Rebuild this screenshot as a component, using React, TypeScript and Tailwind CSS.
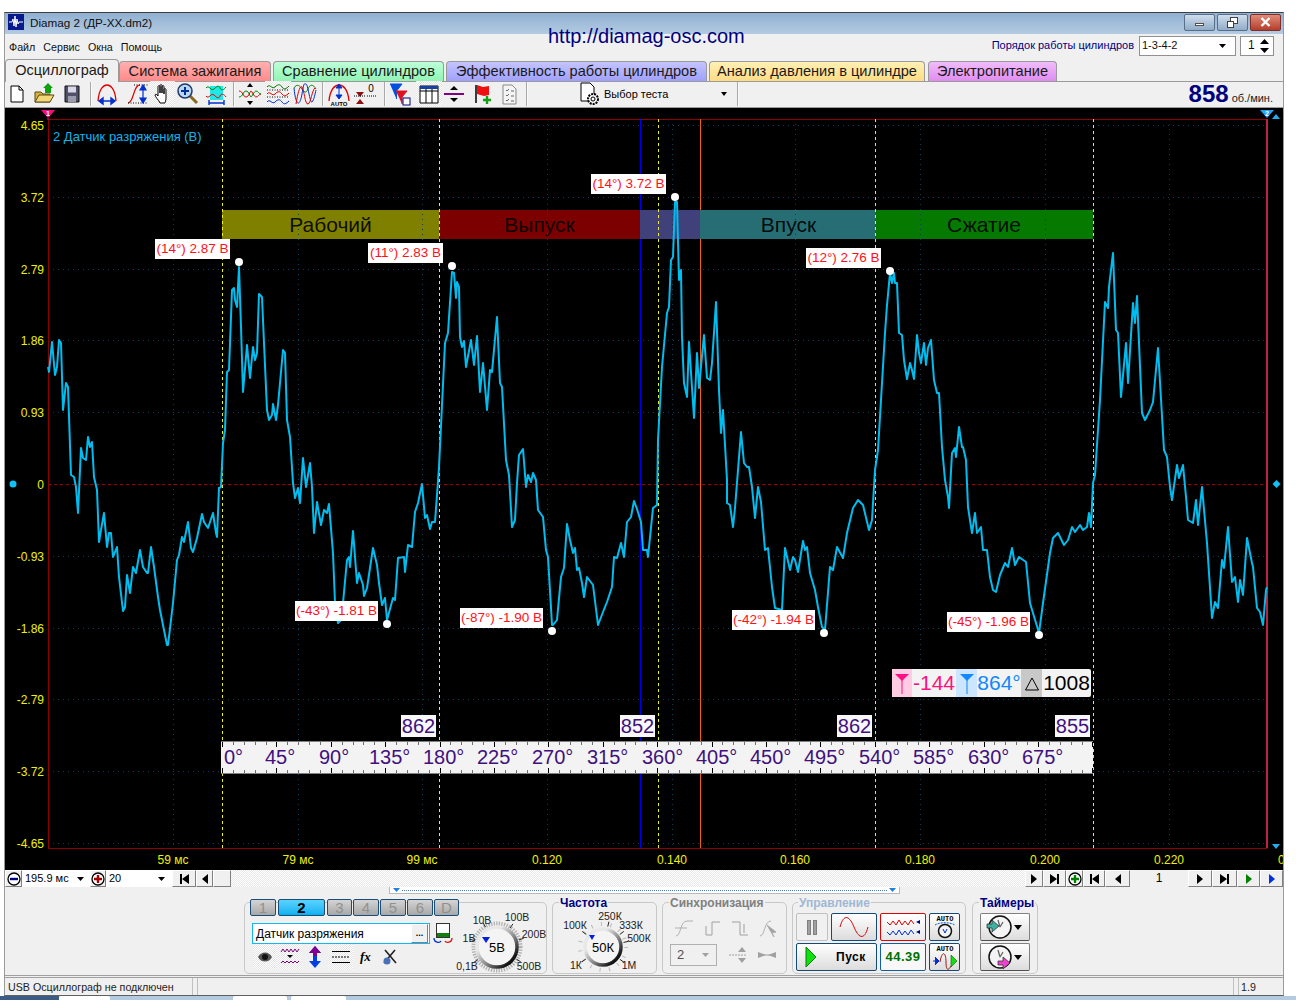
import React from 'react';

// кривая датчика разряжения, координаты страницы
const TRACE = `48,367 49,372 50,362 52,342 55,375 57,367 59,340 61,343 63,410 66,383 68,387 71,475 74,477 76,487 78,513 81,448 83,458 86,460 88,437 90,447 92,442 94,477 97,490 99,542 101,530 104,513 107,547 109,533 111,533 113,557 117,547 119,577 123,611 125,607 127,575 130,593 133,567 136,573 140,550 143,567 147,573 148,573 151,547 154,567 158,597 160,610 163,625 167,645 168,645 171,620 173,603 177,560 179,555 182,537 184,542 188,522 191,548 193,552 197,538 202,514 204,522 208,528 213,513 216,533 217,537 219,488 221,487 223,443 225,430 227,372 229,370 232,290 234,288 235,300 237,307 239,267 241,327 243,392 247,345 250,378 253,347 255,360 257,353 259,294 262,297 264,343 267,410 269,420 272,415 273,404 276,420 278,405 283,350 285,353 287,420 290,437 293,483 295,498 298,488 300,503 303,458 306,487 310,463 312,487 314,533 317,502 321,525 324,510 327,513 329,504 333,553 335,603 338,623 341,620 343,603 347,560 349,557 350,567 353,531 357,583 359,573 363,585 364,596 367,588 373,548 377,565 379,583 382,605 385,598 387,620 393,598 395,600 398,558 404,557 405,572 408,545 412,547 415,512 418,503 422,484 425,518 427,515 430,529 432,522 435,522 437,495 439,467 445,343 448,333 452,272 454,273 456,298 457,282 459,287 460,337 462,347 464,341 466,367 471,340 474,365 477,336 480,392 483,363 487,410 490,370 492,372 497,317 500,383 502,387 506,460 509,475 512,527 515,520 517,483 519,455 523,449 526,487 528,475 531,482 533,473 536,480 538,510 543,517 546,550 548,557 552,625 553,625 557,620 561,577 564,568 567,524 570,540 573,553 575,548 577,570 579,568 582,583 584,597 587,577 593,585 598,625 603,612 607,602 612,587 614,557 617,558 621,543 624,557 627,522 631,517 634,501 637,509 641,522 643,550 647,550 648,557 653,508 657,505 658,440 662,367 667,313 669,307 671,260 673,257 675,202 677,202 679,280 681,270 682,337 684,383 687,397 689,342 694,418 697,353 699,388 704,335 707,378 710,380 712,363 716,302 719,390 721,433 723,410 727,480 727,503 730,505 733,527 735,508 738,470 741,432 744,463 747,467 749,467 752,487 755,518 758,487 761,502 765,550 768,548 772,587 775,608 782,610 785,548 790,570 793,557 795,560 798,572 803,541 805,550 807,547 810,573 815,590 818,607 822,627 825,630 830,567 833,570 837,547 843,558 847,533 853,508 858,500 863,505 869,530 872,520 875,470 878,450 885,333 887,305 890,273 892,283 894,273 895,283 897,283 899,333 902,335 904,360 907,379 910,363 912,370 914,379 917,335 919,353 921,363 924,343 926,365 928,348 931,340 934,380 937,393 939,393 942,447 945,480 948,497 949,508 952,453 955,448 956,457 959,427 962,447 963,447 966,460 968,507 972,533 975,513 977,533 981,527 983,550 987,550 990,577 993,590 996,592 1000,575 1005,563 1008,567 1012,548 1015,565 1019,557 1026,562 1030,603 1033,613 1039,633 1043,603 1050,553 1053,538 1058,533 1064,545 1068,540 1072,527 1075,532 1080,525 1083,530 1087,527 1089,513 1091,527 1093,483 1095,475 1100,400 1105,302 1108,308 1109,287 1113,253 1116,330 1118,333 1121,397 1126,343 1128,383 1133,303 1135,323 1137,296 1142,413 1145,420 1150,410 1153,402 1158,348 1164,450 1167,457 1170,487 1172,500 1177,465 1179,478 1183,465 1186,497 1188,520 1193,523 1196,500 1198,525 1202,487 1207,543 1212,618 1215,602 1218,608 1222,560 1224,568 1228,527 1232,582 1235,577 1238,602 1240,580 1243,595 1247,538 1252,563 1253,567 1257,608 1260,612 1263,625 1266,590 1267,587`;

const Y_LABELS = [
    ['4.65', 125], ['3.72', 197], ['2.79', 269], ['1.86', 340], ['0.93', 412], ['0', 484],
    ['-0.93', 556], ['-1.86', 628], ['-2.79', 699], ['-3.72', 771], ['-4.65', 843],
] as const;
const X_LABELS = [
    ['59 мс', 173], ['79 мс', 298], ['99 мс', 422], ['0.120', 547], ['0.140', 672],
    ['0.160', 795], ['0.180', 920], ['0.200', 1045], ['0.220', 1169],
] as const;
const V_GRID = [173, 298, 422, 547, 672, 795, 920, 1045, 1169];
const STROKES = [222, 439, 658, 875, 1093];
const PEAKS = [
    ['(14°) 2.87 В', 155, 239, 75],
    ['(11°) 2.83 В', 368, 243, 75],
    ['(14°) 3.72 В', 591, 174, 75],
    ['(12°) 2.76 В', 806, 248, 75],
    ['(-43°) -1.81 В', 295, 601, 83],
    ['(-87°) -1.90 В', 460, 608, 83],
    ['(-42°) -1.94 В', 732, 610, 83],
    ['(-45°) -1.96 В', 947, 612, 83],
] as const;
const DOTS = [[239, 262], [452, 266], [675, 197], [890, 271], [387, 624], [552, 631], [824, 633], [1039, 635]];
const RPMS = [['862', 401], ['852', 620], ['862', 837], ['855', 1055]] as const;
const DEGREES = [
    ['0°', 224], ['45°', 265], ['90°', 319], ['135°', 369], ['180°', 423], ['225°', 477], ['270°', 532], ['315°', 587],
    ['360°', 642], ['405°', 696], ['450°', 750], ['495°', 804], ['540°', 859], ['585°', 913], ['630°', 968], ['675°', 1022],
] as const;

const Sep = () => <div className="w-[2px] h-[24px] border-l border-[#a8a8a8] bg-white/60" />;

const Doc = () => (
    <svg width="24" height="24" viewBox="0 0 24 24"><path d="M6 4h8l4 4v12H6z" fill="#fff" stroke="#000" /><path d="M14 4v4h4" fill="none" stroke="#000" /></svg>
);
const Folder = () => (
    <svg width="24" height="24" viewBox="0 0 24 24">
        <path d="M3 10h6l2 2h7v8H3z" fill="#d8b040" stroke="#5a4a10" />
        <path d="M3 20l4-7h15l-4 7z" fill="#f0d878" stroke="#5a4a10" />
        <path d="M13 11V6h-2l5-5 5 5h-2v5z" fill="#10a010" />
    </svg>
);
const Floppy = () => (
    <svg width="24" height="24" viewBox="0 0 24 24">
        <path d="M5 4h14v16H5z" fill="#50506a" stroke="#111" />
        <rect x="8" y="4.5" width="8" height="6" fill="#d8d8e8" />
        <rect x="8" y="14" width="8" height="6" fill="#9a9aaa" />
    </svg>
);
const ArcH = () => (
    <svg width="24" height="24" viewBox="0 0 24 24">
        <path d="M3 19C4 6 9 3 12 3s8 3 9 16" fill="none" stroke="#e00000" strokeWidth="1.3" />
        <path d="M4 19h16M4 19l4-3v6zM20 19l-4-3v6z" fill="#0030d0" stroke="#0030d0" strokeWidth="1.4" />
    </svg>
);
const CurveV = () => (
    <svg width="24" height="24" viewBox="0 0 24 24">
        <path d="M2 21c6 0 5-18 12-18" fill="none" stroke="#e00000" strokeWidth="1.2" />
        <path d="M8 3h14M2 21h20" stroke="#000" strokeDasharray="1 1.5" />
        <path d="M17 4v16M17 3l-3 5h6zM17 21l-3-5h6z" fill="#0030d0" stroke="#0030d0" strokeWidth="1.2" />
    </svg>
);
const Hand = () => (
    <svg width="24" height="24" viewBox="0 0 24 24">
        <path d="M9 21c-1-3-5-6-5-8 0-1 2-1 3 1V5c0-2 2-2 2 0v6-7c0-2 2-2 2 0v7-6c0-2 2-2 2 0v7-4c0-2 2-2 2 0v8c0 3-1 4-1 5z" fill="#fff" stroke="#000" />
    </svg>
);
const Lens = () => (
    <svg width="24" height="24" viewBox="0 0 24 24">
        <path d="M14 14l7 7" stroke="#8a6a20" strokeWidth="3" />
        <circle cx="9" cy="9" r="7" fill="#bcd8f0" stroke="#20386a" strokeWidth="1.5" />
        <path d="M5 9h8M9 5v8" stroke="#0030a0" strokeWidth="2" />
    </svg>
);
const WaveBox = () => (
    <svg width="24" height="24" viewBox="0 0 24 24">
        <rect x="6" y="4" width="13" height="14" fill="#20e8e8" />
        <path d="M2 6c3-4 5 4 8 1s5-4 6-1 4 2 6-1" fill="none" stroke="#008000" />
        <path d="M2 14c3 4 5-4 8-1s5 4 6 1 4-2 6 1" fill="none" stroke="#e00000" />
        <path d="M5 21h15M5 18v5M20 18v5" stroke="#0030d0" strokeWidth="1.4" />
    </svg>
);
const Cross = () => (
    <svg width="24" height="24" viewBox="0 0 24 24">
        <path d="M1 9c4 0 4 6 7 6s4-6 5-6 3 6 5 6 3-3 5-3" fill="none" stroke="#e00000" />
        <path d="M1 15c4 0 4-6 7-6s4 6 5 6 3-6 5-6 3 3 5 3" fill="none" stroke="#008000" />
        <path d="M12 1l-3 4h6zM12 23l-3-4h6z" />
    </svg>
);
const Stack = () => (
    <svg width="24" height="24" viewBox="0 0 24 24" fill="none">
        <path d="M1 5c3-4 5 3 8 0s5-3 7 0 4 2 7-1" stroke="#008000" />
        <path d="M1 8h22" stroke="#000" strokeDasharray="1 1.5" />
        <path d="M1 12c3-4 5 3 8 0s5-3 7 0 4 2 7-1" stroke="#e00000" />
        <path d="M1 15h22" stroke="#000" strokeDasharray="1 1.5" />
        <path d="M1 20c3-4 5 3 8 0s5-3 7 0 4 2 7-1" stroke="#0030d0" />
    </svg>
);
const Overlap = () => (
    <svg width="24" height="24" viewBox="0 0 24 24" fill="none">
        <path d="M1 6c3-5 6-2 8 1s4 5 6 0 5-5 8 0" stroke="#008000" />
        <path d="M1 6c2 20 6 18 8 6s2-10 4-10 4 20 6 18 3-8 4-12" stroke="#0030d0" />
        <path d="M3 22C5 10 7 3 9 5s3 18 6 17 4-14 7-16" stroke="#e00000" />
    </svg>
);
const AutoArc = () => (
    <svg width="24" height="24" viewBox="0 0 24 24">
        <path d="M2 19C3 7 8 3 12 3s9 4 10 16" fill="none" stroke="#e00000" strokeWidth="1.3" />
        <path d="M12 3v13M12 2l-3 4h6zM12 17l-3-4h6z" fill="#0030d0" stroke="#0030d0" />
        <text x="12" y="23.5" textAnchor="middle" fontSize="6" fontWeight="700" fontFamily="Liberation Sans">AUTO</text>
    </svg>
);
const Zero = () => (
    <svg width="24" height="24" viewBox="0 0 24 24">
        <path d="M3 10h8L7 15zM3 22h8L7 17z" fill="#901010" />
        <path d="M1 14h12M14 14h9" stroke="#000" strokeDasharray="1 1" />
        <text x="18" y="10" textAnchor="middle" fontSize="10" fontFamily="Liberation Sans">0</text>
    </svg>
);
const Filter = () => (
    <svg width="24" height="24" viewBox="0 0 24 24">
        <path d="M2 2h12L8.5 9v8" fill="#0050e0" stroke="#0050e0" />
        <path d="M8 9h11l-5 6v7" fill="#e01020" stroke="#e01020" />
        <rect x="15" y="16" width="7" height="7" fill="#fff" stroke="#000080" />
    </svg>
);
const Table = () => (
    <svg width="24" height="24" viewBox="0 0 24 24">
        <path d="M3 4h18v17H3z" fill="#fff" stroke="#000" />
        <rect x="3" y="4" width="18" height="3" fill="#1840a0" />
        <path d="M3 9h18M9 7v14M15 7v14" stroke="#000" />
    </svg>
);
const Divide = () => (
    <svg width="24" height="24" viewBox="0 0 24 24">
        <path d="M2 12h20" stroke="#800080" strokeWidth="2" />
        <path d="M12 4l-4 4h8zM12 20l-4-4h8z" />
    </svg>
);
const Flag = () => (
    <svg width="24" height="24" viewBox="0 0 24 24">
        <path d="M7 3v18" stroke="#000" strokeWidth="1.5" />
        <path d="M8 3l6 2 6-1v9l-5 1-7-2z" fill="#f01010" />
        <path d="M14 18h8M18 14v8" stroke="#10a010" strokeWidth="2.4" />
    </svg>
);
const CheckDoc = () => (
    <svg width="24" height="24" viewBox="0 0 24 24">
        <path d="M6 3h9l4 4v15H6z" fill="#f4f4f4" stroke="#888" />
        <path d="M9 8l1 1 2-2M9 13l1 1 2-2M9 18l1 1 2-2M14 9h3M14 14h3M14 19h3" fill="none" stroke="#666" />
    </svg>
);
const GearDoc = () => (
    <svg width="24" height="24" viewBox="0 0 24 24">
        <path d="M3 1h9l4 4v14H3z" fill="#fff" stroke="#000" />
        <circle cx="15" cy="17" r="5" fill="#f4f4f4" stroke="#000" strokeWidth="2" strokeDasharray="2 1" />
        <circle cx="15" cy="17" r="2" fill="#fff" stroke="#000" />
    </svg>
);

const Pressed = ({ children, className }: { children: React.ReactNode; className: string }) => (
    <div className={`h-[26px] flex items-center justify-center ${className} bg-[repeating-conic-gradient(#ffffff_0_25%,#e4e4e4_0_50%)] bg-size-[2px_2px]`}>
        {children}
    </div>
);

// кнопки навигации нижней строки
const Nav = ({ kind, color = '#000' }: { kind: string; color?: string }) => (
    <svg width="12" height="12" viewBox="0 0 12 12" fill={color}>
        {kind === 'next' && <path d="M3 1l6 5-6 5z" />}
        {kind === 'prev' && <path d="M9 1L3 6l6 5z" />}
        {kind === 'last' && <path d="M1 1l7 5-7 5zM8 1h2v10H8z" />}
        {kind === 'first' && <path d="M11 1L4 6l7 5zM2 1h2v10H2z" />}
    </svg>
);
const RoundBtn = ({ color, plus }: { color: string; plus: boolean }) => (
    <svg width="14" height="14" viewBox="0 0 14 14">
        <circle cx="7" cy="7" r="6" fill="#fff" stroke="#000" strokeWidth="1.3" />
        <path d={plus ? 'M3 7h8M7 3v8' : 'M3 7h8'} stroke={color} strokeWidth="2.4" />
    </svg>
);
const navBtn = 'h-full flex items-center justify-center bg-[#f0f0f0] border-t border-l border-white border-r border-b border-r-[#808080] border-b-[#808080]';

const Dial = ({ value, hatch, labels }: { value: string; hatch: boolean; labels: [string, number, number][] }) => {
    const id = hatch ? 'knobA' : 'knobB';
    const r = hatch ? 20 : 18;
    return (
        <svg width="100" height="68" viewBox="-50 -34 100 68" className="shrink-0 overflow-visible">
            <defs>
                <linearGradient id={id} x1="0" y1="0" x2="1" y2="1">
                    <stop offset="0.3" stopColor="#e8e8e8" />
                    <stop offset="0.6" stopColor="#808080" />
                    <stop offset="0.85" stopColor="#111" />
                </linearGradient>
            </defs>
            {hatch
                ? <circle r="23.5" fill="none" stroke="#b0b0b0" strokeWidth="4" strokeDasharray="1.3 1.3" />
                : <circle r="23" fill="none" stroke="#b8b8b8" strokeWidth="4" strokeDasharray="1 8.6" />}
            {labels.map(([, x, y], i) => {
                const a = Math.atan2(y - 3, x);
                return <line key={i} x1={Math.cos(a) * (r + 3)} y1={Math.sin(a) * (r + 3)} x2={Math.cos(a) * (r + 8)} y2={Math.sin(a) * (r + 8)} stroke="#222" />;
            })}
            <circle r={r} fill="#f4f4f4" stroke={`url(#${id})`} strokeWidth="3.5" />
            <path d={hatch ? 'M-15-10h8l-4 6z' : 'M-14-12h6l-3 5z'} fill="#0020e0" />
            <text y="4.5" textAnchor="middle" fontSize="13" fontFamily="Liberation Sans">{value}</text>
            {labels.map(([t, x, y]) => (
                <text key={t} x={x} y={y} textAnchor="middle" fontSize="10.5" fill="#222" fontFamily="Liberation Sans">{t}</text>
            ))}
        </svg>
    );
};

const Legend = ({ children, className }: { children: React.ReactNode; className: string }) => (
    <div className={`absolute -top-[6px] z-10 bg-[#f0f0f0] px-px text-[12px] leading-[13px] font-bold whitespace-nowrap ${className}`}>{children}</div>
);

const Group = ({ className, children }: { className: string; children: React.ReactNode }) => (
    <div className={`relative h-[72px] border border-[#c8c8c8] rounded-[5px] shrink-0 ${className}`}>{children}</div>
);

const chBtn = 'h-[17px] shrink-0 rounded-[2px] border border-[#1c4c78] flex items-center justify-center text-[15px] leading-none';
const ctlBtn = 'h-[28px] rounded-[2px] border border-[#144a78] bg-linear-to-b from-white to-[#dcdcdc] flex items-center justify-center';

const Clock = ({ arrow }: { arrow: string }) => (
    <svg width="26" height="26" viewBox="0 0 26 26">
        <circle cx="14" cy="13" r="11" fill="#f4f4f4" stroke="#111" strokeWidth="1.5" />
        <path d="M14 13l-2-7M14 13l3-5" stroke="#666" strokeWidth="1.3" />
        {arrow === 'in'
            ? <path d="M1 10h5V6l7 6-7 6v-4H1z" fill="#40b0a0" stroke="#222" strokeWidth="0.7" />
            : <path d="M12 17h5v-4l7 6-7 6v-4h-5z" fill="#f040d0" stroke="#222" strokeWidth="0.7" />}
    </svg>
);

const Chart = () => (
    <div className="relative h-[763px] bg-black overflow-hidden font-['Liberation_Sans',Arial,sans-serif]">
        {/* такты */}
        <div className="absolute left-[217px] top-[102px] h-[29px] w-[871px] flex text-[21px] leading-[29px] text-center text-black/90">
            <div className="w-[217px] bg-[#808000]">Рабочий</div>
            <div className="w-[201px] bg-[#7c0000]">Выпуск</div>
            <div className="w-[60px] bg-[#40407a]" />
            <div className="w-[175px] bg-[#266e74] pl-[2px]">Впуск</div>
            <div className="w-[218px] bg-[#067a00]">Сжатие</div>
        </div>

        <svg className="absolute inset-0" width="1278" height="763" viewBox="5 108 1278 763" fill="none">
            {Y_LABELS.map(([t, y]) => (
                <line key={t} x1="48" x2="1267" y1={y + 0.5} y2={y + 0.5} stroke={t === '0' ? '#a00000' : '#0c3c5c'} strokeDasharray={t === '0' ? '3 3' : '1 4'} />
            ))}
            {V_GRID.map(x => <line key={x} x1={x + 0.5} x2={x + 0.5} y1="119" y2="848" stroke="#0c3c5c" strokeDasharray="1 4" />)}
            <path d="M48.5 848.5V119.5H1267M48.5 848.5H1267" stroke="#900000" />
            <path d="M1266.5 119V848" stroke="#c02040" />
            <path d="M1267.5 119V848" stroke="#3050d0" />
            {STROKES.map(x => <line key={x} x1={x + 0.5} x2={x + 0.5} y1="119" y2="848" stroke="#f0f020" strokeDasharray="3 3" />)}
            <path d="M640.5 119V210M640.5 239V848" stroke="#0000e8" strokeWidth="1" />
            <path d="M700.5 119V210M700.5 239V848" stroke="#f06010" />
            <polyline points={TRACE} stroke="#00bdf0" strokeWidth="2" strokeLinejoin="round" />
            {DOTS.map(([x, y]) => <circle key={x} cx={x} cy={y} r="4" fill="#fff" />)}

            <path d="M41 110h14l-7 8z" fill="#ff0a80" />
            <path d="M48 118v2" stroke="#ff0a80" />
            <text x="48" y="116" textAnchor="middle" fontSize="7" fontWeight="700" fill="#fff" fontFamily="Liberation Sans">1</text>
            <path d="M1260 110h14l-7 8z" fill="#20a8f8" />
            <text x="1267" y="116" textAnchor="middle" fontSize="7" fontWeight="700" fill="#fff" fontFamily="Liberation Sans">2</text>
            <path d="M1276 114l4 5h-8zM1272 844h8l-4 5z" fill="#20b0f0" />
            <circle cx="13" cy="484" r="3.5" fill="#10c0f8" />
            <path d="M1276.5 480l4 4-4 4-4-4z" fill="#10c0f8" />
        </svg>

        {Y_LABELS.map(([t, y]) => (
            <div key={t} className="absolute left-0 w-[39px] text-right text-[12px] leading-[14px] text-[#f0f000]" style={{ top: y - 108 - 6 }}>{t}</div>
        ))}
        {X_LABELS.map(([t, x]) => (
            <div key={t} className="absolute w-[60px] text-center text-[12px] leading-[14px] text-[#f0f000]" style={{ left: x - 5 - 30, top: 745 }}>{t}</div>
        ))}
        <div className="absolute left-[1273px] top-[745px] text-[12px] leading-[14px] text-[#f0f000]">0</div>

        <div className="absolute left-[48px] top-[22px] text-[13px] leading-[14px] text-[#0fb4ef] whitespace-nowrap">2 Датчик разряжения (В)</div>

        <div className="absolute left-[216px] top-[633px] w-[872px] h-[33px] bg-[#f3f3f3] border-y border-[#808080]">
            <svg width="872" height="31" viewBox="0 0 872 31" className="absolute inset-0">
                {Array.from({ length: 81 }, (_, i) => {
                    const x = Math.round(1 + i * 10.88) + 0.5;
                    const big = i % 5 === 0;
                    return (
                        <g key={i} stroke={big ? '#000' : '#707070'}>
                            <line x1={x} x2={x} y1="0" y2={big ? 5 : 3} />
                            <line x1={x} x2={x} y1={big ? 26 : 28} y2="31" />
                        </g>
                    );
                })}
            </svg>
        </div>
        {DEGREES.map(([t, x]) => (
            <div key={t} className="absolute text-[20px] leading-[24px] text-[#40107e]" style={{ left: x - 5, top: 637 }}>{t}</div>
        ))}

        {RPMS.map(([t, x], i) => (
            <div key={i} className="absolute w-[35px] h-[22px] bg-[#f8f8f8] text-center text-[20px] leading-[22px] text-[#40107e]" style={{ left: x - 5, top: 607 }}>{t}</div>
        ))}

        {PEAKS.map(([t, x, y, w]) => (
            <div key={t} className="absolute h-[20px] bg-white text-center text-[13.5px] leading-[20px] text-[#ff1020] whitespace-nowrap" style={{ left: x - 5, top: y - 108, width: w }}>{t}</div>
        ))}

        {/* блок значений */}
        <div className="absolute left-[887px] top-[561px] h-[28px] flex bg-[#f3f3f3] text-[21px] leading-[27px] rounded-r-[2px]">
            <div className="w-[20px] bg-[#ffcce4] flex items-center justify-center">
                <svg width="18" height="24" viewBox="0 0 18 24"><path d="M2 3h14l-7 7z" fill="#ff1080" /><path d="M9 5v18" stroke="#ff1080" /></svg>
            </div>
            <div className="w-[44px] text-center text-[#ff1080]">-144</div>
            <div className="w-[21px] bg-[#cce6ff] flex items-center justify-center">
                <svg width="18" height="24" viewBox="0 0 18 24"><path d="M2 3h14l-7 7z" fill="#1088ff" /><path d="M9 5v18" stroke="#1088ff" /></svg>
            </div>
            <div className="w-[44px] text-center text-[#1088ff]">864°</div>
            <div className="w-[21px] bg-[#c8c8c8] flex items-center justify-center">
                <svg width="16" height="18" viewBox="0 0 16 18"><path d="M8 4l6.5 12h-13z" fill="none" stroke="#000" /></svg>
            </div>
            <div className="w-[49px] text-center text-black">1008</div>
        </div>
    </div>
);

export default function App() {
    return (
        <div className="relative w-[1296px] h-[1000px] overflow-hidden bg-white pt-[12px] text-black font-['Liberation_Sans',Arial,sans-serif]">
            <div className="ml-[4px] w-[1280px] h-[984px] border-x border-t border-b border-x-[#9a9a9a] border-t-[#404040] border-b-[#606060] bg-[#f0f0f0] flex flex-col">
                {/* заголовок */}
                <div className="h-[21px] pb-[2px] flex items-center bg-linear-to-b from-[#8fb0d2] to-[#b4cbe2] pl-[3px] pr-[2px]">
                    <svg width="16" height="16" viewBox="0 0 16 16">
                        <rect width="16" height="16" fill="#0a1a8c" />
                        <path d="M1 8h3l1-3 1 7 1-10 1 11 1-8 1 5 1-2h4" fill="none" stroke="#fff" />
                    </svg>
                    <span className="ml-[6px] text-[11.7px] text-[#101010] whitespace-nowrap">Diamag 2 (ДР-XX.dm2)</span>
                    <div className="ml-auto flex items-center gap-[2px]">
                        <div className="w-[31px] h-[17px] rounded-[2px] border border-[#56708c] bg-linear-to-b from-[#d0deec] to-[#92acc8] flex items-center justify-center">
                            <div className="w-[9px] h-[3px] mt-[5px] bg-white border border-[#505050]" />
                        </div>
                        <div className="w-[31px] h-[17px] rounded-[2px] border border-[#56708c] bg-linear-to-b from-[#d0deec] to-[#92acc8] flex items-center justify-center">
                            <svg width="11" height="11" viewBox="0 0 11 11" fill="#fff" stroke="#404040"><rect x="3.5" y="0.5" width="7" height="6" /><rect x="0.5" y="4.5" width="6" height="6" /></svg>
                        </div>
                        <div className="w-[31px] h-[17px] rounded-[2px] border border-[#7c3028] bg-linear-to-b from-[#e08a78] to-[#b43c2c] flex items-center justify-center">
                            <svg width="11" height="10" viewBox="0 0 11 10"><path d="M1.5 1l8 8M9.5 1l-8 8" stroke="#fff" strokeWidth="2.4" /></svg>
                        </div>
                    </div>
                </div>

                {/* меню */}
                <div className="relative h-[25px] flex items-start pl-[4px] pr-[9px] text-[10.7px] leading-[13px] text-[#111]">
                    <div className="flex gap-[8px] mt-[7px]">
                        <span>Файл</span>
                        <span>Сервис</span>
                        <span>Окна</span>
                        <span>Помощь</span>
                    </div>
                    <div className="absolute left-[543px] -top-[10px] text-[20px] leading-[24px] text-[#000080] whitespace-nowrap">http://diamag-osc.com</div>
                    <div className="ml-auto flex items-center mt-[2px] text-[11px]">
                        <span className="text-[#000080] mr-[5px]">Порядок работы цилиндров</span>
                        <div className="w-[97px] h-[20px] bg-white border border-[#909090] flex items-center pl-[2px] pr-[9px] justify-between">
                            <span>1-3-4-2</span>
                            <svg width="7" height="4" viewBox="0 0 7 4"><path d="M0 0h7L3.500 4z" /></svg>
                        </div>
                        <div className="ml-[4px] w-[34px] h-[20px] bg-white border border-[#909090] flex items-center pl-[7px] pr-[4px] justify-between text-[12px]">
                            <span>1</span>
                            <svg width="9" height="14" viewBox="0 0 9 14"><path d="M4.500 0L9 5H0zM4.500 14L0 9h9z" /></svg>
                        </div>
                    </div>
                </div>

                {/* вкладки */}
                <div className="h-[22px] flex items-end text-[14.6px] leading-[18px] text-[#1a1a1a]">
                    <div className="relative z-10 w-[114px] h-[23px] -mb-px bg-[#f0f0f0] border border-b-0 border-[#9a9a9a] rounded-t-[4px] text-center text-[14.5px] leading-[21px]">Осциллограф</div>
                    <div className="w-[152px] h-[20px] border border-b-0 border-[#9a9a9a] rounded-t-[4px] text-center bg-linear-to-b from-[#ffb0b0] to-[#ff8a8a]">Система зажигания</div>
                    <div className="ml-[2px] w-[171px] h-[20px] border border-b-0 border-[#9a9a9a] rounded-t-[4px] text-center bg-linear-to-b from-[#bcffd8] to-[#90f4b4]">Сравнение цилиндров</div>
                    <div className="ml-[2px] w-[261px] h-[20px] border border-b-0 border-[#9a9a9a] rounded-t-[4px] text-center bg-linear-to-b from-[#c4c4ff] to-[#a0a0fc]">Эффективность работы цилиндров</div>
                    <div className="ml-[2px] w-[216px] h-[20px] border border-b-0 border-[#9a9a9a] rounded-t-[4px] text-center bg-linear-to-b from-[#fff0b4] to-[#ffdc84]">Анализ давления в цилиндре</div>
                    <div className="ml-[3px] w-[129px] h-[20px] border border-b-0 border-[#9a9a9a] rounded-t-[4px] text-center bg-linear-to-b from-[#f0bcfc] to-[#e08cf0]">Электропитание</div>
                </div>

                {/* панель инструментов */}
                <div className="h-[27px] border-y border-[#9a9a9a] flex items-center">
                    <div className="flex items-center">
                        <div className="ml-0"><Doc /></div>
                        <div className="ml-[3px]"><Folder /></div>
                        <div className="ml-[4px]"><Floppy /></div>
                        <div className="ml-[6px]"><Sep /></div>
                        <div className="ml-[3px]"><ArcH /></div>
                        <div className="ml-[7px]"><CurveV /></div>
                        <Pressed className="w-[25px] ml-0"><Hand /></Pressed>
                        <div className="ml-[1px]"><Lens /></div>
                        <div className="ml-[4px]"><WaveBox /></div>
                        <div className="ml-[5px]"><Sep /></div>
                        <div className="ml-[3px]"><Cross /></div>
                        <Pressed className="w-[26px] ml-[3px]"><Stack /></Pressed>
                        <div className="ml-[2px]"><Overlap /></div>
                        <div className="ml-[5px]"><Sep /></div>
                        <div className="ml-[3px]"><AutoArc /></div>
                        <div className="ml-[2px]"><Zero /></div>
                        <div className="ml-[7px]"><Sep /></div>
                        <div className="ml-[2px]"><Filter /></div>
                        <Pressed className="w-[26px] ml-[4px]"><Table /></Pressed>
                        <div className="ml-0"><Divide /></div>
                        <div className="ml-[3px]"><Flag /></div>
                        <div className="ml-[4px]"><CheckDoc /></div>
                        <div className="ml-[5px]"><Sep /></div>
                    </div>
                    <div className="ml-[50px] flex items-center text-[11px]">
                        <GearDoc />
                        <span className="ml-[2px] w-[117px]">Выбор теста</span>
                        <svg width="6" height="4" viewBox="0 0 6 4"><path d="M0 0h6L3 4z" /></svg>
                    </div>
                    <div className="ml-[10px]"><Sep /></div>
                    <div className="ml-auto flex items-baseline pr-[10px]">
                        <span className="text-[24px] leading-[24px] font-bold text-[#000080]">858</span>
                        <span className="ml-[3px] text-[11px] text-[#222]">об./мин.</span>
                    </div>
                </div>

                <Chart />

                {/* строка масштаба */}
                <div className="h-[17px] flex items-stretch text-[11px] leading-[17px]">
                    <div className={`w-[17px] ${navBtn}`}><RoundBtn color="#000080" plus={false} /></div>
                    <div className="w-[68px] bg-white flex items-center justify-between pl-[3px] pr-[6px]">
                        <span>195.9 мс</span>
                        <svg width="7" height="4" viewBox="0 0 7 4"><path d="M0 0h7L3.500 4z" /></svg>
                    </div>
                    <div className={`w-[16px] ${navBtn}`}><RoundBtn color="#a00000" plus /></div>
                    <div className="w-[66px] bg-white flex items-center justify-between pl-[3px] pr-[7px]">
                        <span>20</span>
                        <svg width="7" height="4" viewBox="0 0 7 4"><path d="M0 0h7L3.500 4z" /></svg>
                    </div>
                    <div className={`w-[24px] ${navBtn}`}><Nav kind="first" /></div>
                    <div className={`w-[17px] ${navBtn}`}><Nav kind="prev" /></div>
                    <div className={`w-[18px] ${navBtn}`} />
                    <div className="flex-1 bg-[repeating-conic-gradient(#ffffff_0_25%,#e8e8e8_0_50%)] bg-size-[2px_2px]" />
                    <div className={`w-[18px] ${navBtn}`}><Nav kind="next" /></div>
                    <div className={`w-[23px] ${navBtn}`}><Nav kind="last" /></div>
                    <div className={`w-[17px] ${navBtn}`}><RoundBtn color="#008000" plus /></div>
                    <div className={`w-[22px] ${navBtn}`}><Nav kind="first" /></div>
                    <div className={`w-[25px] ${navBtn}`}><Nav kind="prev" /></div>
                    <div className="w-[58px] bg-[#f0f0f0] text-center text-[12px]">1</div>
                    <div className={`w-[24px] ${navBtn}`}><Nav kind="next" /></div>
                    <div className={`w-[25px] ${navBtn}`}><Nav kind="last" /></div>
                    <div className={`w-[23px] ${navBtn}`}><Nav kind="next" color="#008000" /></div>
                    <div className={`w-[23px] ${navBtn}`}><Nav kind="next" color="#0030e0" /></div>
                </div>

                {/* нижняя панель */}
                <div className="h-[89px] border-b border-[#a0a0a0]">
                    <div className="ml-[384px] w-[511px] h-[7px] border border-[#b8b8b8] border-t-0 bg-white flex items-center justify-between px-[3px]">
                        <svg width="7" height="4" viewBox="0 0 7 4"><path d="M0 0h7L3.500 4z" fill="#2080e0" /></svg>
                        <div className="flex-1 mx-[2px] border-t border-dotted border-[#5080c0]" />
                        <svg width="7" height="4" viewBox="0 0 7 4"><path d="M0 0h7L3.500 4z" fill="#2080e0" /></svg>
                    </div>

                    <div className="mt-[8px] ml-[239px] flex gap-[5px]">
                        <Group className="w-[303px] flex pl-[7px]">
                            <div className="w-[201px] -mt-[4px] shrink-0">
                                <div className="-ml-[2px] flex text-[#909090] gap-px">
                                    <div className={`${chBtn} w-[26px] bg-linear-to-b from-[#d4d4d4] to-[#a8a8a8]`}>1</div>
                                    <div className={`${chBtn} w-[47px] ml-px bg-linear-to-b from-[#58d4ff] to-[#00b0f0] text-black font-bold`}>2</div>
                                    <div className={`${chBtn} w-[25px] ml-px bg-linear-to-b from-[#d4d4d4] to-[#a8a8a8]`}>3</div>
                                    <div className={`${chBtn} w-[26px] bg-linear-to-b from-[#d4d4d4] to-[#a8a8a8]`}>4</div>
                                    <div className={`${chBtn} w-[26px] bg-linear-to-b from-[#d4d4d4] to-[#a8a8a8]`}>5</div>
                                    <div className={`${chBtn} w-[26px] bg-linear-to-b from-[#d4d4d4] to-[#a8a8a8]`}>6</div>
                                    <div className={`${chBtn} w-[25px] bg-linear-to-b from-[#d4d4d4] to-[#a8a8a8]`}>D</div>
                                </div>
                                <div className="mt-[7px] flex items-center">
                                    <div className="w-[178px] h-[21px] border border-[#10b8f8] bg-white flex items-center justify-between pl-[3px] pr-[1px] text-[12px]">
                                        <span>Датчик разряжения</span>
                                        <div className={`w-[17px] h-[15px] ${navBtn} text-[9px] leading-none font-bold`}>...</div>
                                    </div>
                                    <svg className="ml-[3px]" width="20" height="21" viewBox="0 0 20 21">
                                        <rect x="3.500" y="0.500" width="13" height="14" fill="#fff" stroke="#333" />
                                        <rect x="4" y="10" width="12" height="4" fill="#108010" />
                                        <path d="M1 15c0 5 6 5 7 3" fill="none" stroke="#0030d0" strokeWidth="1.3" />
                                        <path d="M19 15c0 5-6 5-7 3" fill="none" stroke="#e01010" strokeWidth="1.3" />
                                    </svg>
                                </div>
                                <div className="mt-px flex items-center h-[24px]">
                                    <Pressed className="w-[24px] ml-px h-[23px]">
                                        <svg width="16" height="12" viewBox="0 0 16 12"><path d="M1 6c3-6 11-6 14 0-3 6-11 6-14 0z" fill="#555" /><circle cx="8" cy="6" r="3" fill="#111" /></svg>
                                    </Pressed>
                                    <Pressed className="w-[24px] ml-px h-[23px]">
                                        <svg width="20" height="20" viewBox="0 0 20 20" fill="none"><path d="M1 5l2-3 2 3 2-3 2 3 2-3 2 3 2-3 2 3 2-3" stroke="#800080" /><path d="M1 16l2-2 2 2 2-2 2 2 2-2 2 2 2-2 2 2 2-2" stroke="#800080" /><path d="M7 8h6l-3 3z" fill="#000" /></svg>
                                    </Pressed>
                                    <svg className="ml-[6px]" width="14" height="22" viewBox="0 0 14 22"><path d="M7 0l6 7H9v8h4l-6 7-6-7h4V7H1z" fill="#0040e0" /><path d="M7 0l6 7H9v3H5V7H1z" fill="#800090" /></svg>
                                    <Pressed className="w-[25px] ml-[6px] h-[23px]">
                                        <svg width="20" height="16" viewBox="0 0 20 16" fill="none" stroke="#000"><path d="M1 2.500h18M1 13.500h18" /><path d="M1 8h18" strokeDasharray="2 1" /></svg>
                                    </Pressed>
                                    <span className="ml-[7px] w-[16px] font-['Liberation_Serif',serif] italic font-bold text-[13px]">fx</span>
                                    <svg className="ml-[6px]" width="16" height="18" viewBox="0 0 16 18"><path d="M3 2l11 13M13 2L2 15" stroke="#222" strokeWidth="1.6" /><circle cx="5" cy="13" r="3.500" fill="#4870b8" /></svg>
                                </div>
                            </div>
                            <div className="-ml-[6px] mt-[10px]">
                                <Dial value="5В" hatch labels={[['10В', -15, -23], ['100В', 20, -26], ['1В', -28, -5], ['200В', 37, -9], ['0,1В', -30, 23], ['500В', 32, 23]]} />
                            </div>
                        </Group>

                        <Group className="w-[105px] flex justify-center">
                            <Legend className="left-[6px] text-[#000080]">Частота</Legend>
                            <div className="mt-[10px] -ml-[3px]">
                                <Dial value="50К" hatch={false} labels={[['250К', 7, -27], ['100К', -28, -18], ['333К', 28, -18], ['500К', 36, -5], ['1К', -27, 22], ['1М', 26, 22]]} />
                            </div>
                        </Group>

                        <Group className="w-[125px]">
                            <Legend className="left-[6px] text-[#808080]">Синхронизация</Legend>
                            <div className="mt-[15px] ml-[11px] flex gap-[8px]">
                                <svg width="20" height="20" viewBox="0 0 20 20" fill="none" stroke="#b0b0b0"><path d="M2 18c5 0 4-15 11-15h6M1 10h12" /></svg>
                                <svg width="20" height="20" viewBox="0 0 20 20" fill="none" stroke="#a0a0a0"><path d="M4 17h6V4h8M4 8v9" /></svg>
                                <svg width="20" height="20" viewBox="0 0 20 20" fill="none" stroke="#a0a0a0"><path d="M2 4h8v13h8M14 6v9" /></svg>
                                <svg width="20" height="20" viewBox="0 0 20 20" fill="none" stroke="#b0b0b0"><path d="M2 18c5 0 4-15 11-15" /><path d="M9 7l9 7-4 1 2 4z" fill="#a0a0a0" /></svg>
                            </div>
                            <div className="mt-[6px] ml-[7px] flex items-center">
                                <div className="w-[47px] h-[22px] border border-[#b0b0b0] flex items-center justify-between pl-[6px] pr-[7px] text-[13px] text-[#505050]">
                                    <span>2</span>
                                    <svg width="7" height="4" viewBox="0 0 7 4"><path d="M0 0h7L3.500 4z" fill="#a0a0a0" /></svg>
                                </div>
                                <svg className="ml-[11px]" width="20" height="20" viewBox="0 0 20 20"><path d="M1 10h18" stroke="#a0a0a0" strokeDasharray="2 1" /><path d="M14 2l-4 5h8zM14 18l-4-5h8z" fill="#a0a0a0" /></svg>
                                <svg className="ml-[9px]" width="20" height="20" viewBox="0 0 20 20"><path d="M1 7l8 3-8 3zM19 7l-8 3 8 3z" fill="#a0a0a0" /><path d="M1 10h18" stroke="#a0a0a0" /></svg>
                            </div>
                        </Group>

                        <Group className="w-[174px] pl-[3px] pt-[10px]">
                            <Legend className="left-[5px] text-[#a0b8d4]">Управление</Legend>
                            <div className="grid grid-cols-[32px_46px_46px_31px] gap-x-[3px] gap-y-[2px]">
                                <div className="h-[28px] rounded-[2px] border border-[#c0c0c0] flex items-center justify-center gap-[2px]">
                                    <div className="w-[4px] h-[15px] bg-[#a0a0a0] border border-[#808080]" />
                                    <div className="w-[4px] h-[15px] bg-[#a0a0a0] border border-[#808080]" />
                                </div>
                                <div className={ctlBtn}>
                                    <svg width="30" height="22" viewBox="0 0 30 22" fill="none"><path d="M1 11C5-4 11 1 15 11s10 15 14 0" stroke="#e00000" /></svg>
                                </div>
                                <div className="h-[28px] rounded-[2px] border border-[#e00000] bg-linear-to-b from-white to-[#e8e8e8] flex items-center justify-center">
                                    <svg width="34" height="20" viewBox="0 0 34 20" fill="none"><path d="M1 5l3 3 3-4 3 4 3-5 3 5 3-4 3 4 3-5 3 4" stroke="#e00000" /><path d="M1 15l3 3 3-4 3 4 3-5 3 5 3-4 3 4 3-5 3 4" stroke="#0030d0" /><path d="M30 5l4-2v4zM30 15l4-2v4z" fill="#000080" /></svg>
                                </div>
                                <div className={ctlBtn}>
                                    <svg width="26" height="26" viewBox="0 0 26 26" fill="none"><text x="13" y="7" textAnchor="middle" fontSize="7" fontWeight="700" fill="#000" fontFamily="Liberation Mono">AUTO</text><path d="M3 11c5-3 15-3 20 0" stroke="#0060e0" strokeDasharray="2 1" /><circle cx="13" cy="17" r="6.500" fill="#f4f4f4" stroke="#111" strokeWidth="1.500" /><path d="M11 15l2 4 2-4" stroke="#0030d0" /></svg>
                                </div>
                                <div className={`${ctlBtn} col-span-2 justify-start pl-[8px]`}>
                                    <svg width="12" height="22" viewBox="0 0 12 22"><path d="M1 1l10 10-10 10z" fill="#10e010" stroke="#008000" /></svg>
                                    <span className="ml-[19px] text-[12px] font-bold tracking-[0.5px]">Пуск</span>
                                </div>
                                <div className="h-[28px] rounded-[2px] border border-[#1060a0] bg-[#f8f8f8] flex items-center justify-center text-[13px] font-bold text-[#007000] tracking-[0.5px]">44.39</div>
                                <div className={ctlBtn}>
                                    <svg width="26" height="26" viewBox="0 0 26 26" fill="none"><text x="13" y="7" textAnchor="middle" fontSize="7" fontWeight="700" fill="#000" fontFamily="Liberation Mono">AUTO</text><path d="M8 18c2-12 6-10 6 0s3 8 5 4" stroke="#a01010" /><path d="M1 17h5M3 13l4 4-4 4" fill="#0030d0" stroke="#0030d0" /><path d="M19 11l6 6-6 6z" fill="#10e010" stroke="#006000" strokeWidth="0.600" /></svg>
                                </div>
                            </div>
                        </Group>

                        <Group className="w-[66px] ml-[1px] pl-[7px] pt-[10px]">
                            <Legend className="left-[6px] text-[#000080]">Таймеры</Legend>
                            <div className="w-[50px] h-[28px] rounded-[2px] border border-[#808080] border-b-[#505050] bg-linear-to-b from-white to-[#dcdcdc] flex items-center justify-between pl-[5px] pr-[7px]">
                                <Clock arrow="in" />
                                <svg width="8" height="5" viewBox="0 0 8 5"><path d="M0 0h8L4 5z" /></svg>
                            </div>
                            <div className="mt-[2px] w-[50px] h-[28px] rounded-[2px] border border-[#808080] border-b-[#505050] bg-linear-to-b from-white to-[#dcdcdc] flex items-center justify-between pl-[5px] pr-[7px]">
                                <Clock arrow="out" />
                                <svg width="8" height="5" viewBox="0 0 8 5"><path d="M0 0h8L4 5z" /></svg>
                            </div>
                        </Group>
                    </div>
                </div>

                {/* статус */}
                <div className="flex-1 mt-px border-t border-[#a0a0a0] flex items-stretch text-[10.7px] leading-[16px] text-[#222]">
                    <div className="w-[188px] pl-[3px] pt-px border-r border-[#c0c0c0]">USB Осциллограф не подключен</div>
                    <div className="ml-[4px] flex-1 border-l border-r border-[#c0c0c0]" />
                    <div className="ml-[4px] w-[45px] pl-[2px] pt-px border-l border-[#c0c0c0]">1.9</div>
                </div>
            </div>

            {/* край панели задач */}
            <div className="h-[4px] flex bg-[#b4cae0]">
                <div className="w-[59px] bg-[#3c5c84]" />
                <div className="w-[51px] bg-white rounded-t-[2px]" />
                <div className="w-[123px]" />
                <div className="w-[54px] bg-white rounded-t-[2px]" />
                <div className="w-[4px]" />
                <div className="w-[55px] bg-white rounded-t-[2px]" />
            </div>
        </div>
    );
}
